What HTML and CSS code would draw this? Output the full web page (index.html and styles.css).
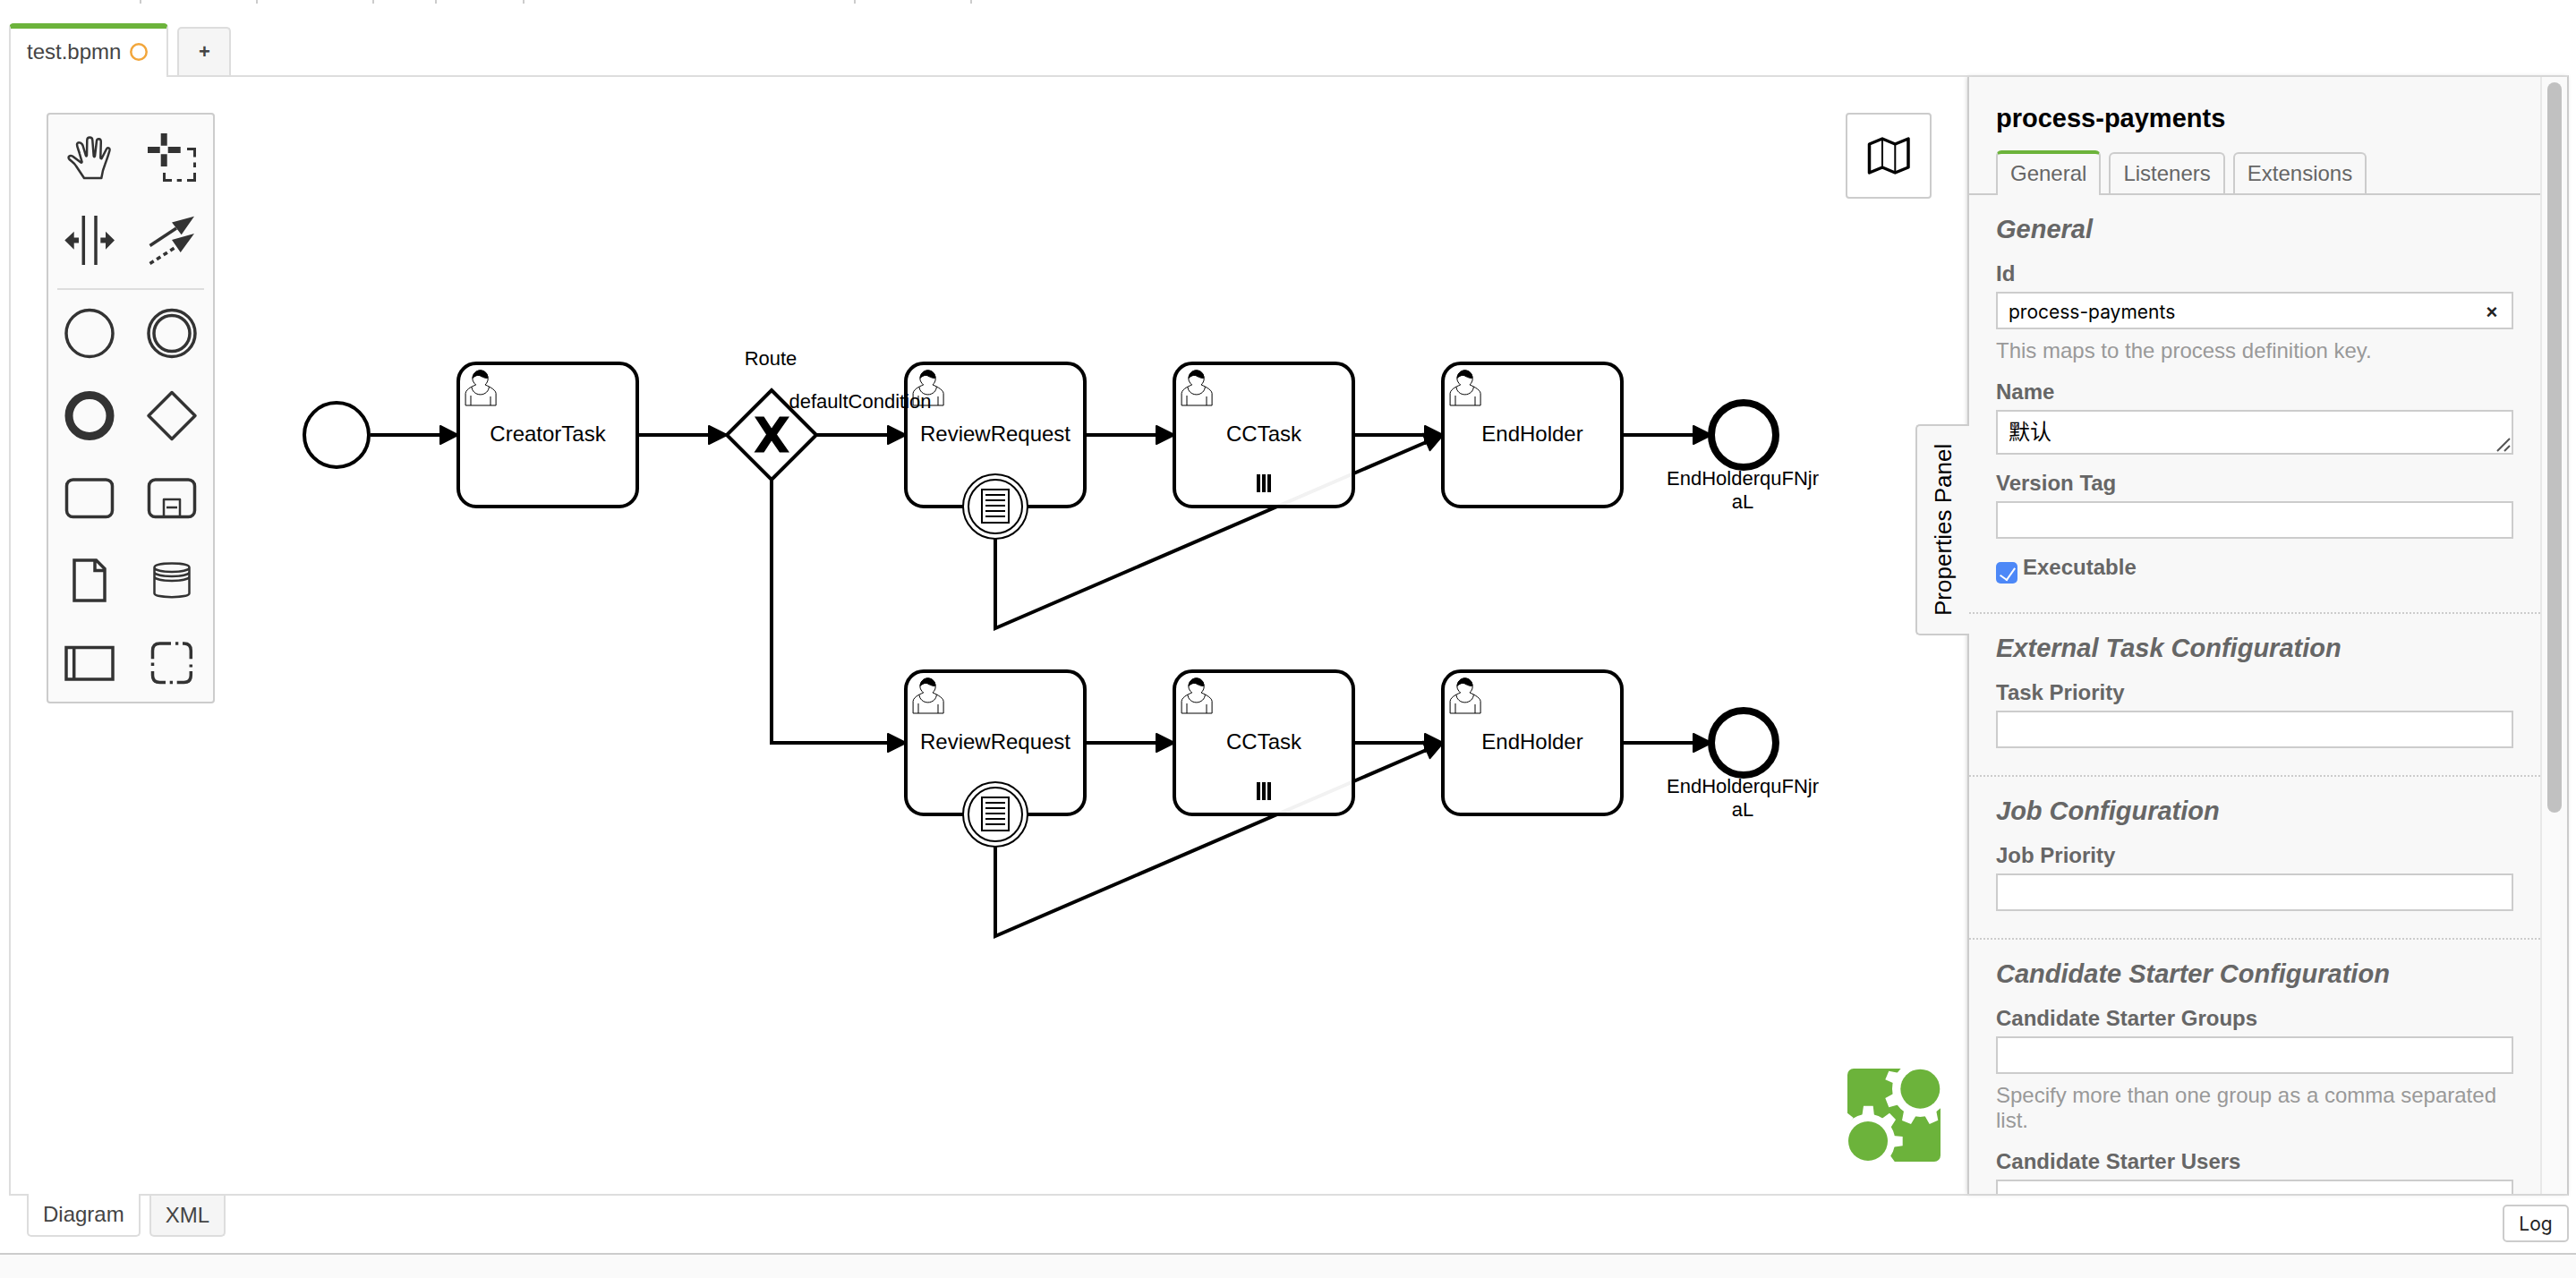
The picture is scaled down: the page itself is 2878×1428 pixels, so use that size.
FILE: index.html
```html
<!DOCTYPE html>
<html lang="en">
<head>
<meta charset="utf-8">
<title>test.bpmn</title>
<link rel="stylesheet" href="styles.css">
</head>
<body>
<div class="toolbar" aria-hidden="true">
  <span class="slot slot-file"></span><span class="slot slot-pair"></span><span class="slot slot-pair"></span><span class="slot slot-single"></span><span class="slot slot-color"></span><span class="slot slot-align"></span><span class="slot slot-pair"></span>
</div>

<nav class="file-tabs">
  <button class="file-tab active">test.bpmn <svg class="dirty" width="20" height="20" viewBox="0 0 20 20"><circle cx="10" cy="10" r="8.7"/></svg></button>
  <button class="file-tab add">+</button>
</nav>

<main class="editor">
  <section class="canvas">
    <svg class="diagram" width="100%" height="100%">
      <defs>
        <marker id="arrow" markerUnits="userSpaceOnUse" markerWidth="30" markerHeight="30" refX="22" refY="12" orient="auto">
          <path d="M2 2 L22 12 L2 22 Z" fill="#000" stroke="#000" stroke-width="2" stroke-linejoin="round"/>
        </marker>
        <g id="user" transform="scale(2)" stroke="#000" stroke-width=".5">
          <path fill="#fff" d="m15,12 c0.909,-0.845 1.594,-2.049 1.594,-3.385 0,-2.554 -1.805,-4.622 -4.357,-4.622 -2.552,0 -4.288,2.068 -4.288,4.622 0,1.348 0.974,2.562 1.896,3.405 -0.529,0.187 -5.669,2.097 -5.794,4.756 v6.718 h17 v-6.718 c0,-2.298 -5.528,-4.595 -6.051,-4.776z m-8,6 l0,5.5 m11,0 l0,-5"/>
          <path fill="#fff" d="m15,12 m2.162,1.009 c0,2.447 -2.158,4.431 -4.821,4.431 -2.665,0 -4.822,-1.981 -4.822,-4.431"/>
          <path fill="#000" d="m15,12 m-6.9,-3.8 c0,0 2.251,-2.358 4.274,-1.177 2.024,1.181 4.221,1.537 4.124,0.965 -0.098,-0.57 -0.117,-3.791 -4.191,-4.136 -3.572,0.348 -4.275,3.56 -4.207,4.348z"/>
        </g>
        <g id="task">
          <rect class="shape" width="200" height="160" rx="20"/>
          <use href="#user"/>
        </g>
        <g id="conditional">
          <circle class="thin" r="36"/>
          <circle class="thin" r="30"/>
          <path class="thin" d="M-15 -19 H15 V18 H-15 Z M-11 -13 H11 M-11 -7 H11 M-11 -1 H11 M-11 5 H11 M-11 11 H11"/>
        </g>
      </defs>
      <g transform="translate(-12 -86)">
        <g class="flows">
          <path d="M414 486 H512"/>
          <path d="M712 486 H812"/>
          <path d="M912 486 H1012"/>
          <path d="M862 536 V830 H1012"/>
        </g>
        <circle class="shape" cx="376" cy="486" r="36"/>
        <use href="#task" x="512" y="406"/>
        <text class="name" x="612" y="493">CreatorTask</text>
        <path class="shape" d="M862 436 L912 486 L862 536 L812 486 Z"/>
        <path d="M843 465.500 H853.500 L862 478.500 L871 465.500 H882 L868 485.500 L882 505.500 H871 L862 492.500 L853.500 505.500 H842.500 L856 485.500 Z"/>
        <text class="label" x="861" y="408">Route</text>

        <g>
          <g class="flows">
            <path d="M1212 486 H1312"/>
            <path d="M1512 486 H1612"/>
            <path d="M1812 486 H1912"/>
            <path d="M1112 602 V702 L1612 486"/>
          </g>
          <use href="#task" x="1012" y="406"/>
          <use href="#task" x="1312" y="406"/>
          <use href="#task" x="1612" y="406"/>
          <text class="name" x="1112" y="493">ReviewRequest</text>
          <text class="name" x="1412" y="493">CCTask</text>
          <text class="name" x="1712" y="493">EndHolder</text>
          <use href="#conditional" x="1112" y="566"/>
          <path class="bars" d="M1406 530 V550 M1412 530 V550 M1418 530 V550"/>
          <circle class="shape end" cx="1948" cy="486" r="36"/>
          <text class="label" x="1947" y="542">EndHolderquFNjr</text>
          <text class="label" x="1947" y="568">aL</text>
        </g>
        <text class="label" x="961" y="456">defaultCondition</text>

        <g transform="translate(0 344)">
          <g class="flows">
            <path d="M1212 486 H1312"/>
            <path d="M1512 486 H1612"/>
            <path d="M1812 486 H1912"/>
            <path d="M1112 602 V702 L1612 486"/>
          </g>
          <use href="#task" x="1012" y="406"/>
          <use href="#task" x="1312" y="406"/>
          <use href="#task" x="1612" y="406"/>
          <text class="name" x="1112" y="493">ReviewRequest</text>
          <text class="name" x="1412" y="493">CCTask</text>
          <text class="name" x="1712" y="493">EndHolder</text>
          <use href="#conditional" x="1112" y="566"/>
          <path class="bars" d="M1406 530 V550 M1412 530 V550 M1418 530 V550"/>
          <circle class="shape end" cx="1948" cy="486" r="36"/>
          <text class="label" x="1947" y="542">EndHolderquFNjr</text>
          <text class="label" x="1947" y="568">aL</text>
        </g>
      </g>
    </svg>

    <div class="palette">
      <button class="tool" aria-label="Hand tool"><svg viewBox="0 0 60 60"><path class="fine" d="M24 53 H43.300 C44 48 45 43 47.300 37.700 C49 33 51 28 52.500 22 C53 19 50 18.500 49 20.500 L43.600 31 C43 31.500 42.300 31 42.300 30 L42.800 12 C42.500 8.500 38.500 8.500 38 11.500 L36 28.500 C35.700 29.500 35 29.500 34.700 28.500 L33.300 10.500 C33 6.500 27.500 6.500 27.300 10.500 L27 27.500 C26.800 28.700 26.200 28.700 25.800 27.500 L22.500 16.500 C21 12.500 16 12.500 16 15.500 C16 18 18 22 19 26 L21.600 35 C21.500 36 20.800 36 20 35.300 L11 28.500 C8 27 5 29.500 7.500 32 C10 34.500 13 36 15 39.500 Z"/></svg></button>
      <button class="tool" aria-label="Lasso tool"><svg viewBox="0 0 60 60"><path class="solid" d="M17.700 3 H24.700 V16.700 H17.700Z M17.700 26.300 H24.700 V40 H17.700Z M3 18 H16.700 V25 H3Z M25.700 18 H39.700 V25 H25.700Z"/><path class="dashes" d="M47 20.500 H55.500 V29.500 M55.500 35.500 V41 M55.500 47 V55.500 H47 M41 55.500 H35.700 M30 55.500 H21.500 V47"/></svg></button>
      <button class="tool" aria-label="Space tool"><svg viewBox="0 0 60 60"><path d="M23.300 3 V58 M37 3 V58"/><path class="solid" d="M2.300 30.500 L12.700 20.700 V27.400 H18 V33.600 H12.700 V40.800Z M58 30.500 L48 20.700 V27.400 H42.300 V33.600 H48 V40.800Z"/></svg></button>
      <button class="tool" aria-label="Connect tool"><svg viewBox="0 0 60 60"><path d="M5.500 36.500 L35 17"/><path stroke-dasharray="5 4" d="M5.500 56.500 L33 39"/><path class="solid" d="M55 3.700 L30 10.400 L40.700 24.200Z M55 22.900 L30 30 L39.700 43.900Z"/></svg></button>
      <hr class="separator">
      <button class="tool" aria-label="Start event"><svg viewBox="0 0 60 60"><circle cx="30" cy="30.500" r="26"/></svg></button>
      <button class="tool" aria-label="Intermediate event"><svg viewBox="0 0 60 60"><circle cx="30" cy="30.500" r="26"/><circle cx="30" cy="30.500" r="20"/></svg></button>
      <button class="tool" aria-label="End event"><svg viewBox="0 0 60 60"><circle class="bold" cx="30" cy="30.500" r="23"/></svg></button>
      <button class="tool" aria-label="Gateway"><svg viewBox="0 0 60 60"><path d="M30 4.500 L56 30.500 L30 56.500 L4 30.500Z"/></svg></button>
      <button class="tool" aria-label="Task"><svg viewBox="0 0 60 60"><rect x="4.500" y="10" width="51" height="41.500" rx="7"/></svg></button>
      <button class="tool" aria-label="Sub process"><svg viewBox="0 0 60 60"><rect x="4.500" y="10" width="51" height="41.500" rx="7"/><path class="fine" d="M21 51 V32 H39 V51 M24 41 H36"/></svg></button>
      <button class="tool" aria-label="Data object"><svg viewBox="0 0 60 60"><path class="sharp" d="M13 8 H37.500 L47 17.500 V53 H13Z M36 8 V19.500 H47"/></svg></button>
      <button class="tool" aria-label="Data store"><svg viewBox="0 0 60 60"><path class="fine" d="M10.500 16 C10.500 10 49.500 10 49.500 16 V45 C49.500 50.500 10.500 50.500 10.500 45Z M10.500 16 C10.500 22.500 49.500 22.500 49.500 16 M10.500 21 C10.500 27.500 49.500 27.500 49.500 21 M10.500 26 C10.500 32.500 49.500 32.500 49.500 26"/></svg></button>
      <button class="tool" aria-label="Participant"><svg viewBox="0 0 60 60"><path class="sharp" d="M4 13.500 H56 V49 H4Z M12.700 13.500 V49"/></svg></button>
      <button class="tool" aria-label="Group"><svg viewBox="0 0 60 60"><path d="M8.500 26.300 V17 Q8.500 9 16.500 9 H29 M34 9 H37.300 M42 9 H43.500 Q51.300 9 51.300 17 V26.300 M51.300 32.600 V35.400 M51.300 40 V44.500 Q51.300 52.500 43.500 52.500 H35.700 M31 52.500 H27.700 M23 52.500 H16.500 Q8.500 52.500 8.500 44.500 V40 M8.500 34 V30.500"/></svg></button>
    </div>

    <button class="map-toggle" aria-label="Toggle minimap"><svg width="48" height="44" viewBox="0 0 48 44"><path d="M2.500 9 L17 3 L31.300 9 L46 3 V35 L31.300 41 L17 35 L2.500 41Z"/><path class="fold" d="M17 4 V34 M31.300 10 V40"/></svg></button>

    <a class="logo" href="#" aria-label="bpmn.io"><svg width="104" height="104" viewBox="0 0 104 104">
      <rect class="green" width="104" height="104" rx="7"/>
      <g fill="#fff">
        <circle cx="81.300" cy="22.700" r="31.300"/>
        <path d="M81.300 -1 H105 V23 H81.300Z M46.300 2.700 L42.300 12.300 L53 17 L58 5Z M42.300 33 L46.300 43.300 L58 40 L51 28.300Z M63.300 46 L61 58 L71 62 L77 52Z M86 52 L91.700 62 L101.300 57.700 L99 46Z"/>
        <circle cx="23" cy="81" r="30.300"/>
        <path d="M-1 81 H23 V105 H-1Z M18 41.700 H28.700 L30 53 H16.300Z M47 49.700 L54 57 L47.700 67 L37 57Z M51 75 L61.700 76 V86.300 L51 87.700Z M-1 49 L6.700 55 L-1 64Z M48.300 97.700 L53.500 105 H23 L40 88Z"/>
      </g>
      <circle class="green" cx="81.300" cy="22.700" r="22"/>
      <circle class="green" cx="23" cy="81" r="22"/>
    </svg></a>
  </section>

  <aside class="panel">
    <button class="panel-toggle">Properties Panel</button>
    <div class="panel-content">
      <h1 class="panel-title">process-payments</h1>
      <nav class="panel-tabs">
        <a class="panel-tab active" href="#general">General</a>
        <a class="panel-tab" href="#listeners">Listeners</a>
        <a class="panel-tab" href="#extensions">Extensions</a>
      </nav>

      <section class="group" id="general">
        <h2>General</h2>
        <div class="entry">
          <label for="id">Id</label>
          <div class="field"><input type="text" id="id" value="process-payments"><button class="clear" aria-label="Clear">×</button></div>
          <p>This maps to the process definition key.</p>
        </div>
        <div class="entry">
          <label for="name">Name</label>
          <div class="field"><textarea id="name" rows="1">默认</textarea><svg class="grip" width="16" height="16" viewBox="0 0 16 16"><path d="M1 15 L15 1 M9 15 L15 9"/></svg></div>
        </div>
        <div class="entry">
          <label for="version">Version Tag</label>
          <div class="field"><input type="text" id="version"></div>
        </div>
        <div class="entry check">
          <input type="checkbox" id="executable" checked>
          <label for="executable">Executable</label>
        </div>
      </section>

      <section class="group">
        <h2>External Task Configuration</h2>
        <div class="entry">
          <label for="task-priority">Task Priority</label>
          <div class="field"><input type="text" id="task-priority"></div>
        </div>
      </section>

      <section class="group">
        <h2>Job Configuration</h2>
        <div class="entry">
          <label for="job-priority">Job Priority</label>
          <div class="field"><input type="text" id="job-priority"></div>
        </div>
      </section>

      <section class="group">
        <h2>Candidate Starter Configuration</h2>
        <div class="entry">
          <label for="groups">Candidate Starter Groups</label>
          <div class="field"><input type="text" id="groups"></div>
          <p>Specify more than one group as a comma separated list.</p>
        </div>
        <div class="entry">
          <label for="users">Candidate Starter Users</label>
          <div class="field"><input type="text" id="users"></div>
        </div>
      </section>
    </div>
    <div class="scroll-track"><div class="scroll-thumb"></div></div>
  </aside>
</main>

<div class="bottom-bar">
  <nav class="view-tabs">
    <button class="view-tab active">Diagram</button>
    <button class="view-tab">XML</button>
  </nav>
  <button class="log">Log</button>
</div>
<footer class="log-area"></footer>
</body>
</html>
```
FILE: styles.css
```css
* {
  box-sizing: border-box;
}

body {
  margin: 0;
  height: 100vh;
  overflow: hidden;
  display: flex;
  flex-direction: column;
  background: #fff;
  color: #444;
  font-family: Arial, "Liberation Sans", "Noto Sans CJK SC", sans-serif;
  font-size: 24px;
}

button {
  margin: 0;
  padding: 0;
  font: inherit;
  color: inherit;
  background: none;
  border: 0;
}

/* Toolbar */
.toolbar {
  display: flex;
  flex: none;
  height: 26px;
}

.slot {
  height: 4px;
  border-right: 2px solid #ccc;
}

.slot-file { width: 158px; }
.slot-pair { width: 130px; }
.slot-single { width: 70px; }
.slot-color { width: 98px; }
.slot-align { width: 370px; }

/* File tabs */
.file-tabs {
  display: flex;
  flex: none;
  align-items: flex-end;
  gap: 10px;
  height: 58px;
  padding-left: 10px;
}

.file-tab {
  border: 2px solid #ddd;
  border-bottom: 0;
  border-radius: 5px 5px 0 0;
}

.file-tab.active {
  position: relative;
  z-index: 1;
  display: flex;
  align-items: center;
  gap: 10px;
  height: 60px;
  margin-bottom: -2px;
  padding: 0 21px 2px 18px;
  border-top: 6px solid #6cb33b;
  background: #fff;
}

.file-tab.add {
  width: 60px;
  height: 54px;
  background: #f5f5f5;
  font-size: 22px;
  font-weight: bold;
}

.dirty {
  fill: none;
  stroke: #f2a63b;
  stroke-width: 2.5px;
}

/* Editor */
.editor {
  display: flex;
  flex: 1;
  min-height: 0;
  margin: 0 8px 0 10px;
  border: 2px solid #ddd;
  border-right-color: #ccc;
}

.canvas {
  position: relative;
  flex: 1;
  min-width: 0;
  overflow: hidden;
}

.diagram {
  display: block;
}

.flows {
  fill: none;
  stroke: #000;
  stroke-width: 4px;
}

.flows path {
  marker-end: url(#arrow);
}

.shape {
  fill: #fff;
  fill-opacity: .95;
  stroke: #000;
  stroke-width: 4px;
}

.end {
  stroke-width: 8px;
}

.thin {
  fill: #fff;
  stroke: #000;
  stroke-width: 2px;
}

.bars {
  stroke: #000;
  stroke-width: 4px;
}

.name,
.label {
  fill: #000;
  font-size: 24px;
  text-anchor: middle;
}

.label {
  font-size: 22px;
}

.palette {
  position: absolute;
  left: 40px;
  top: 40px;
  display: grid;
  grid-template-columns: 92px 92px;
  border: 2px solid #ccc;
  border-radius: 4px;
  background: #fafafa;
}

.tool {
  display: grid;
  place-items: center;
  height: 92px;
  padding-top: 4px;
}

.tool svg {
  width: 60px;
  height: 60px;
  fill: none;
  stroke: #333;
  stroke-width: 3.5px;
  stroke-linejoin: round;
}

.tool .bold {
  stroke-width: 9px;
}

.tool .fine {
  stroke-width: 2.5px;
}

.tool .dashes {
  stroke-width: 3px;
  stroke-linejoin: miter;
}

.tool .sharp {
  stroke-linejoin: miter;
}

.tool .solid {
  fill: #333;
  stroke: none;
}

.separator {
  grid-column: 1 / 3;
  width: 164px;
  margin: 10px auto 0;
  border: 0;
  border-top: 2px solid #ddd;
}

.map-toggle {
  position: absolute;
  top: 40px;
  right: 40px;
  display: grid;
  place-items: center;
  width: 96px;
  height: 96px;
  border: 2px solid #ccc;
  border-radius: 4px;
  background: #fff;
}

.map-toggle svg {
  fill: none;
  stroke: #000;
  stroke-width: 3.5px;
  stroke-linejoin: round;
}

.map-toggle .fold {
  stroke-width: 2px;
}

.logo {
  position: absolute;
  right: 30px;
  bottom: 36px;
}

.logo svg {
  display: block;
}

.green {
  fill: #6cb33b;
}

/* Properties panel */
.panel {
  position: relative;
  display: flex;
  flex: none;
  width: 670px;
  border-left: 2px solid #ccc;
  background: #f8f8f8;
  box-shadow: 0 0 5px #ccc;
}

.panel-toggle {
  position: absolute;
  top: 388px;
  right: 100%;
  width: 60px;
  height: 236px;
  border: 2px solid #ccc;
  border-left: 0;
  border-radius: 0 5px 5px 0;
  background: #f8f8f8;
  color: #000;
  font-size: 26px;
  writing-mode: vertical-rl;
  transform: rotate(180deg);
}

.panel-content {
  flex: 1;
  min-width: 0;
  overflow: hidden;
  padding-top: 28px;
  color: #666;
}

.panel-title {
  margin: 0 30px 18px;
  color: #000;
  font-size: 29px;
  line-height: 36px;
}

.panel-tabs {
  display: flex;
  align-items: flex-end;
  gap: 9px;
  height: 50px;
  padding: 0 30px;
  border-bottom: 2px solid #ccc;
}

.panel-tab {
  height: 46px;
  padding: 0 14px;
  border: 2px solid #ccc;
  border-bottom: 0;
  border-radius: 6px 6px 0 0;
  color: #666;
  line-height: 44px;
  text-decoration: none;
}

.panel-tab.active {
  height: 50px;
  margin-bottom: -2px;
  border-top: 4px solid #6cb33b;
  background: #f8f8f8;
}

.group {
  padding: 22px 30px 30px;
}

.group + .group {
  border-top: 2px dotted #ccc;
}

.group h2 {
  margin: 0 0 20px;
  font-size: 29px;
  font-style: italic;
  line-height: 32px;
}

.entry + .entry {
  margin-top: 18px;
}

.entry label {
  display: block;
  margin-bottom: 6px;
  font-weight: bold;
  line-height: 28px;
}

.entry p {
  margin: 10px 0 0;
  color: #999;
  line-height: 28px;
}

.field {
  position: relative;
  display: flex;
}

.field input,
.field textarea {
  width: 100%;
  height: 42px;
  margin: 0;
  padding: 2px 12px 0;
  border: 2px solid #ccc;
  border-radius: 0;
  background: #fff;
  color: #000;
  font-family: Inter, "Noto Sans CJK SC", sans-serif;
  font-size: 21px;
}

.field textarea {
  height: 50px;
  padding-top: 7px;
  font-size: 24px;
  line-height: 32px;
  overflow: hidden;
  resize: none;
}

.clear {
  position: absolute;
  top: 0;
  right: 12px;
  width: 24px;
  height: 42px;
  padding-top: 4px;
  color: #222;
  font-size: 22px;
  font-weight: bold;
}

.grip {
  position: absolute;
  right: 3px;
  bottom: 3px;
  fill: none;
  stroke: #555;
  stroke-width: 2px;
}

.check {
  display: flex;
  gap: 6px;
}

.check input {
  position: relative;
  flex: none;
  appearance: none;
  width: 24px;
  height: 24px;
  margin: 8px 0 0;
  border-radius: 5px;
  background: #4d88f7;
}

.check input::after {
  content: "";
  position: absolute;
  left: 8px;
  top: 3px;
  width: 8px;
  height: 15px;
  border: solid #fff;
  border-width: 0 2px 2px 0;
  transform: rotate(35deg);
}

.scroll-track {
  flex: none;
  width: 30px;
  padding: 6px 6px 0;
  border-left: 2px solid #e8e8e8;
  background: #fafafa;
}

.scroll-thumb {
  width: 16px;
  height: 65.7%;
  border-radius: 8px;
  background: #c1c1c1;
}

/* Bottom bar */
.bottom-bar {
  display: flex;
  flex: none;
  justify-content: space-between;
  align-items: flex-start;
  height: 64px;
  padding: 0 8px 0 30px;
}

.view-tabs {
  display: flex;
  gap: 10px;
}

.view-tab {
  height: 46px;
  padding: 0 16px;
  border: 2px solid #ddd;
  border-top: 0;
  border-radius: 0 0 5px 5px;
  background: #f5f5f5;
}

.view-tab.active {
  position: relative;
  height: 48px;
  margin-top: -2px;
  background: #fff;
}

.log {
  width: 74px;
  height: 42px;
  margin-top: 10px;
  border: 2px solid #ccc;
  border-radius: 5px;
  color: #222;
  font-family: Inter, sans-serif;
  font-size: 21px;
}

.log-area {
  flex: none;
  height: 28px;
  border-top: 2px solid #ccc;
  background: #fafafa;
}
```
